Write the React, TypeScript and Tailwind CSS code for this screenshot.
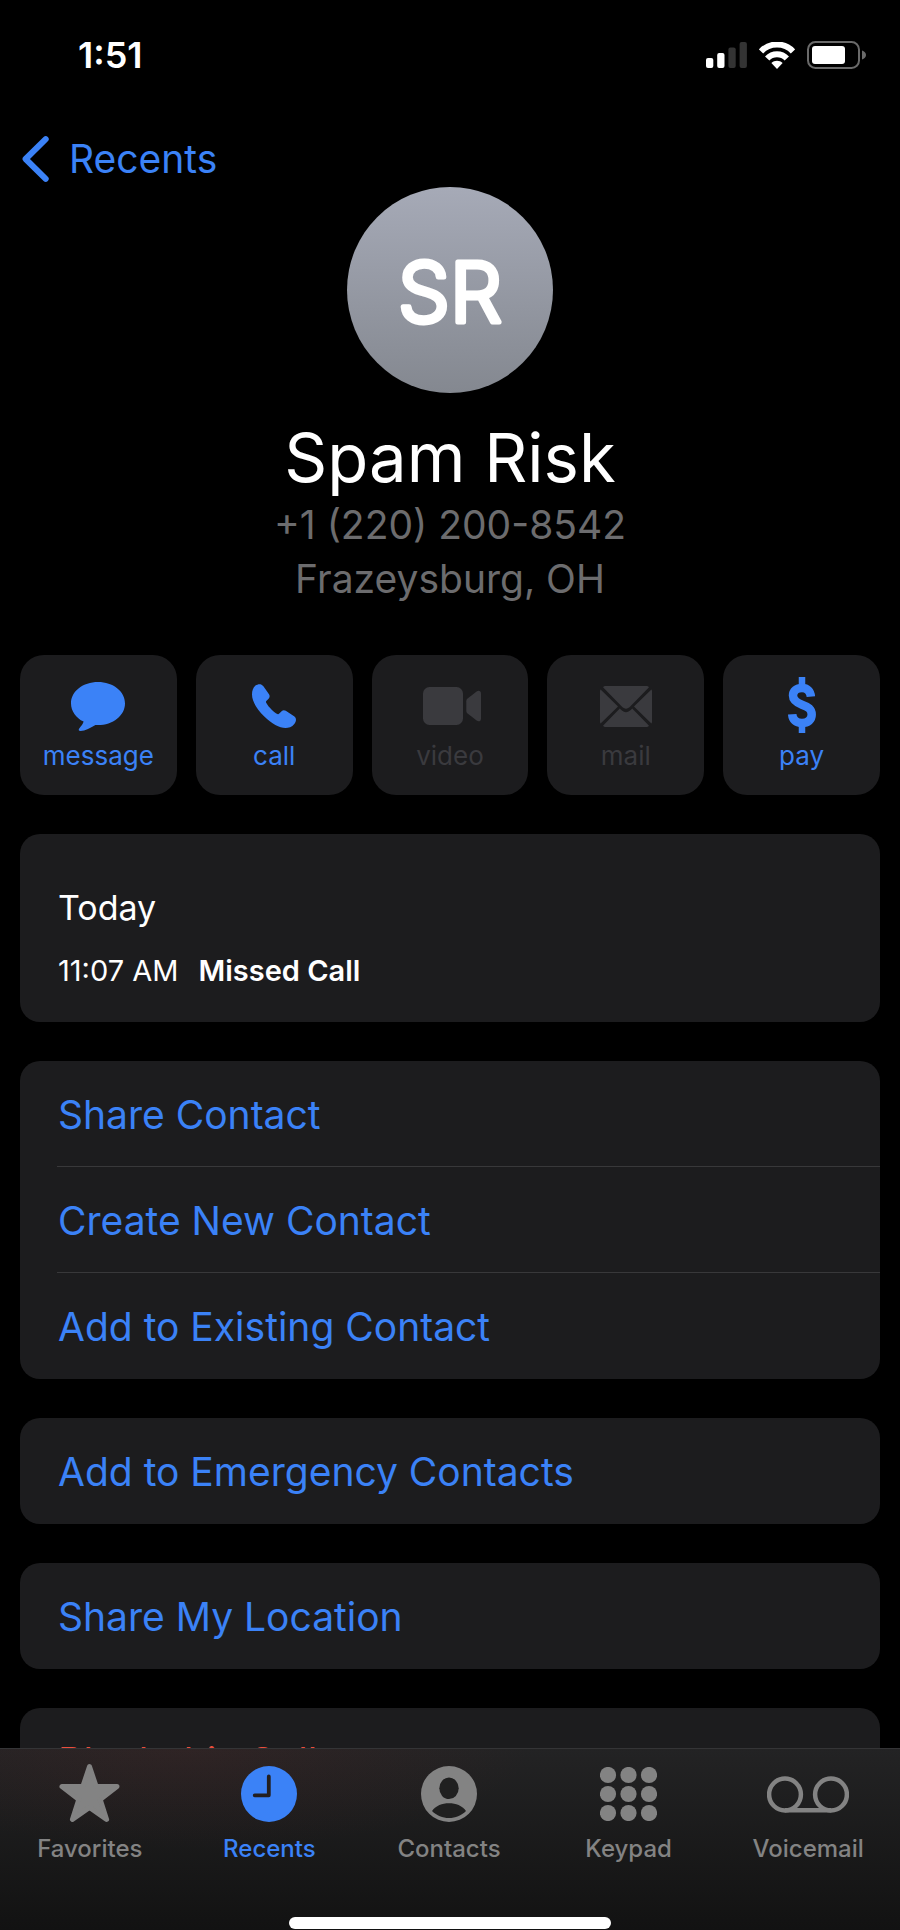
import type { ReactNode } from 'react';

interface Action {
  label: string;
  icon: ReactNode;
  disabled?: boolean;
}

interface Tab {
  label: string;
  icon: ReactNode;
  active?: boolean;
}

const ACTIONS: Action[] = [
  {
    label: 'message',
    icon: (
      <svg width="54" height="49" viewBox="0 0 54 49" fill="currentColor" aria-hidden="true">
        <path d="M27 0C42 0 54 9.400 54 21.400S42 43 27 43h-2.600C20 45.600 14 49 9.600 49c-2 0-2.400-1.400-1.200-2.800C10.200 44.200 12 42 12.600 39.600 5 35.800 0 29 0 21.400 0 9.400 12 0 27 0z" />
      </svg>
    ),
  },
  {
    label: 'call',
    icon: (
      <svg width="44" height="44" viewBox="0 0 44 44" fill="currentColor" aria-hidden="true">
        <path d="M3.500 1.600C6 -.400 9.400 -.500 11.400 2.200L17 10.200c1 1.600.8 3.200-.4 4.500L14.300 17c-.5.500-.5 1-.1 1.700 1.300 2.500 3.400 4.900 5.500 7s4.400 3.700 5.800 4.300c.6.300 1.100.200 1.500-.2l2.600-2.600c1.200-1.200 2.800-1.300 4.200-.4l8.300 5.400c2.500 1.800 2.400 4.700.4 7.500C39.800 43.200 36.500 44 33.500 44c-6 0-14-4.200-21.200-11.400S0 17.500 0 10.500C0 7 1 3.800 3.500 1.600z" />
      </svg>
    ),
  },
  {
    label: 'video',
    disabled: true,
    icon: (
      <svg width="62" height="38" viewBox="-4 0 62 38" fill="currentColor" aria-hidden="true">
        <rect width="40" height="38" rx="6.500" />
        <path d="M43.300 14.200c0-1.300.4-2 1.300-2.800l9-7c2-1.400 4.400-.6 4.400 1.900v25.400c0 2.500-2.400 3.300-4.400 1.900l-9-7c-.9-.8-1.300-1.500-1.300-2.800z" />
      </svg>
    ),
  },
  {
    label: 'mail',
    disabled: true,
    icon: (
      <svg width="52" height="41" viewBox="0 0 52 41" fill="currentColor" aria-hidden="true">
        <path d="M3 1.200C3.600.400 4.600 0 6 0h40c1.400 0 2.400.4 3 1.200L30.200 20.600c-2.800 2.800-5.600 2.800-8.400 0z" />
        <path d="M0 5.500c0-1 .2-1.500.6-2L18 20.500.6 37.500c-.4-.5-.6-1-.6-2zM52 5.500c0-1-.2-1.500-.6-2L34 20.500l17.400 17c.4-.5.6-1 .6-2z" />
        <path d="M3 39.800 19.800 22.600l1.200 1.200c3.300 3.200 6.700 3.200 10 0l1.200-1.200L49 39.800c-.6.800-1.600 1.200-3 1.200H6c-1.400 0-2.400-.4-3-1.200z" />
      </svg>
    ),
  },
  {
    label: 'pay',
    icon: (
      <svg width="28" height="58" viewBox="0 0 28 58" fill="none" stroke="currentColor" aria-hidden="true">
        <path d="M14 0v10M14 46v10" strokeWidth="6.500" />
        <path
          d="M22.900 19.700C22.400 14 19.300 11 14 11S5 14 5 18.600c0 5 3.600 7.100 9 9.100 6.200 2.200 9.700 4.300 9.700 9.900 0 5.200-3.700 8.400-9.700 8.400-6.200 0-9.400-3.200-9.800-8.700"
          strokeWidth="8.500"
        />
      </svg>
    ),
  },
];

const TABS: Tab[] = [
  {
    label: 'Favorites',
    icon: (
      <svg width="61" height="62" viewBox="0 0 61 62" fill="currentColor" stroke="currentColor" strokeWidth="5" strokeLinejoin="round" aria-hidden="true">
        <path d="M30.500 3.600 37.200 23.600H58L41.200 36.400 47.600 56.400 30.500 44.400 13.400 56.400 19.800 36.400 3 23.600H23.800z" />
      </svg>
    ),
  },
  {
    label: 'Recents',
    active: true,
    icon: (
      <svg width="56" height="56" viewBox="0 0 56 56" fill="none" aria-hidden="true">
        <circle cx="28" cy="28" r="28" fill="currentColor" />
        <path d="M27.800 10.500V29.300H13.700" stroke="#231f1f" strokeWidth="3.800" strokeLinecap="round" strokeLinejoin="round" />
      </svg>
    ),
  },
  {
    label: 'Contacts',
    icon: (
      <svg width="56" height="56" viewBox="0 0 56 56" fill="none" aria-hidden="true">
        <circle cx="28" cy="28" r="28" fill="currentColor" />
        <ellipse cx="28" cy="22.300" rx="9.700" ry="10.800" fill="#202020" />
        <path d="M11 45c4-5.400 10-7.700 17-7.700S41 39.600 45 45c-4.800 4.800-10.500 7-17 7s-12.200-2.200-17-7z" fill="#202020" />
      </svg>
    ),
  },
  {
    label: 'Keypad',
    icon: (
      <svg width="57" height="54" viewBox="0 0 57 54" fill="currentColor" aria-hidden="true">
        {[8, 27, 46].map((cy) =>
          [8, 28.5, 49].map((cx) => <circle key={`${cx}-${cy}`} cx={cx} cy={cy} r="8.100" />),
        )}
      </svg>
    ),
  },
  {
    label: 'Voicemail',
    icon: (
      <svg width="82" height="37" viewBox="0 0 82 37" fill="none" stroke="currentColor" strokeWidth="4.500" aria-hidden="true">
        <circle cx="18" cy="18.500" r="15.900" />
        <circle cx="64" cy="18.500" r="15.900" />
        <path d="M18 34.300H64" />
      </svg>
    ),
  },
];

const GROUPS: string[][] = [
  ['Share Contact', 'Create New Contact', 'Add to Existing Contact'],
  ['Add to Emergency Contacts'],
  ['Share My Location'],
];

function StatusBar() {
  return (
    <div className="flex h-[110px] shrink-0 items-center justify-between pr-[34px] pl-[78px]">
      <span className="text-[36px] leading-10 font-semibold">1:51</span>
      <div className="flex items-center gap-3">
        <svg width="41" height="26" viewBox="0 0 41 26" fill="#fff" aria-label="Signal">
          <rect y="16" width="7.300" height="10" rx="2" />
          <rect x="11.200" y="11" width="7.300" height="15" rx="2" />
          <rect x="22.400" y="5.500" width="7.300" height="20.500" rx="2" fill="#333" />
          <rect x="33.600" width="7.300" height="26" rx="2" fill="#333" />
        </svg>
        <svg width="36" height="27" viewBox="0 0 36 27" fill="none" stroke="#fff" strokeWidth="6" aria-label="Wi-Fi">
          <path d="M2 9.400a22 22 0 0 1 32 0" />
          <path d="M8.200 16.500a13.500 13.500 0 0 1 19.600 0" />
          <path d="M12.400 21c3-3 8.200-3 11.200 0L18 27z" fill="#fff" stroke="none" />
        </svg>
        <svg width="59" height="28" viewBox="0 0 59 28" fill="none" aria-label="Battery">
          <rect x="1" y="1" width="51" height="26" rx="7.500" stroke="#6a6a6a" strokeWidth="2" />
          <rect x="5" y="5" width="33" height="18" rx="3" fill="#fff" />
          <path d="M55 9.500c2.400.8 4 2.500 4 4.500s-1.600 3.700-4 4.500z" fill="#6a6a6a" />
        </svg>
      </div>
    </div>
  );
}

function ActionButton({ label, icon, disabled }: Action) {
  return (
    <button
      disabled={disabled}
      className="flex flex-col items-center gap-[5px] rounded-3xl bg-[#1c1c1e] pt-[22px] pb-[23px] text-[#3b82f7] disabled:text-[#3a3a3e]"
    >
      <span className="flex h-[58px] items-center">{icon}</span>
      <span className="text-[26px] leading-8">{label}</span>
    </button>
  );
}

function ActionGroup({ items, danger }: { items: string[]; danger?: boolean }) {
  return (
    <section className={`rounded-[20px] bg-[#1c1c1e] pl-[37px] ${danger ? 'text-[#eb4e3d]' : 'text-[#3b82f7]'}`}>
      {items.map((item) => (
        <button
          key={item}
          className="block h-[106px] w-full border-b border-[#38383a] pt-[2px] pl-px text-left text-[39px] leading-[54px] last:border-b-0"
        >
          {item}
        </button>
      ))}
    </section>
  );
}

function TabBar() {
  return (
    <nav className="shrink-0 border-t border-[#343436] bg-[radial-gradient(ellipse_340px_100px_at_190px_0px,rgba(110,40,40,0.16),transparent),linear-gradient(#232324,#121212)]">
      <div className="grid grid-cols-5 pt-[13px] pr-[2px]">
        {TABS.map(({ label, icon, active }) => (
          <button
            key={label}
            aria-current={active ? 'page' : undefined}
            className="flex flex-col items-center gap-[7px] text-[#838383] aria-[current=page]:text-[#3b82f7]"
          >
            <span className="flex h-16 items-center">{icon}</span>
            <span className="text-[24px] leading-8 font-medium">{label}</span>
          </button>
        ))}
      </div>
      {/* Home indicator */}
      <div className="mx-auto mt-[52px] mb-px h-3 w-[322px] rounded-full bg-white" />
    </nav>
  );
}

export default function App() {
  return (
    <div className="flex h-screen flex-col bg-black font-['Inter','Liberation_Sans',sans-serif] text-white">
      <StatusBar />

      <main className="min-h-0 flex-1 overflow-y-auto [scrollbar-width:none]">
        <div className="flex h-[77px] items-center pt-5 pl-[22px]">
          <a href="#recents" className="flex items-center gap-5 text-[39px] leading-[54px] text-[#3b82f7]">
            <svg width="27" height="46" viewBox="0 0 27 46" fill="none" stroke="currentColor" strokeWidth="6" strokeLinecap="round" strokeLinejoin="round" aria-hidden="true">
              <path d="M23.700 3.200 3.600 23 23.700 42.800" />
            </svg>
            Recents
          </a>
        </div>

        {/* Contact header */}
        <header className="flex flex-col items-center text-center">
          <div className="size-[206px] rounded-full bg-linear-to-b from-[#a6aab7] to-[#848890]">
            <svg viewBox="0 0 206 206" aria-label="SR">
              <text
                x="103"
                y="135"
                textAnchor="middle"
                fill="#fff"
                stroke="#fff"
                strokeWidth="5"
                strokeLinejoin="round"
                className="text-[82px] font-light"
              >
                SR
              </text>
            </svg>
          </div>
          <h1 className="mt-[25px] text-[67px] leading-[80px]">Spam Risk</h1>
          <p className="text-[39px] leading-[54px] text-[#6c6c6e]">+1 (220) 200-8542</p>
          <p className="text-[39px] leading-[54px] text-[#6c6c6e]">Frazeysburg, OH</p>
        </header>

        <div className="mt-[49px] flex flex-col gap-[39px] px-5 pb-10">
          <div className="grid grid-cols-5 gap-[19px]">
            {ACTIONS.map((action) => (
              <ActionButton key={action.label} {...action} />
            ))}
          </div>

          <section className="rounded-[20px] bg-[#1c1c1e] px-[38px] pt-[50px] pb-[31px]">
            <h2 className="text-[34px] leading-[48px]">Today</h2>
            <p className="mt-[19px] flex gap-5 text-[29px] leading-10">
              <time>11:07 AM</time>
              <span className="font-semibold">Missed Call</span>
            </p>
          </section>

          {GROUPS.map((items) => (
            <ActionGroup key={items[0]} items={items} />
          ))}

          <ActionGroup items={['Block this Caller']} danger />
        </div>
      </main>

      <TabBar />
    </div>
  );
}
